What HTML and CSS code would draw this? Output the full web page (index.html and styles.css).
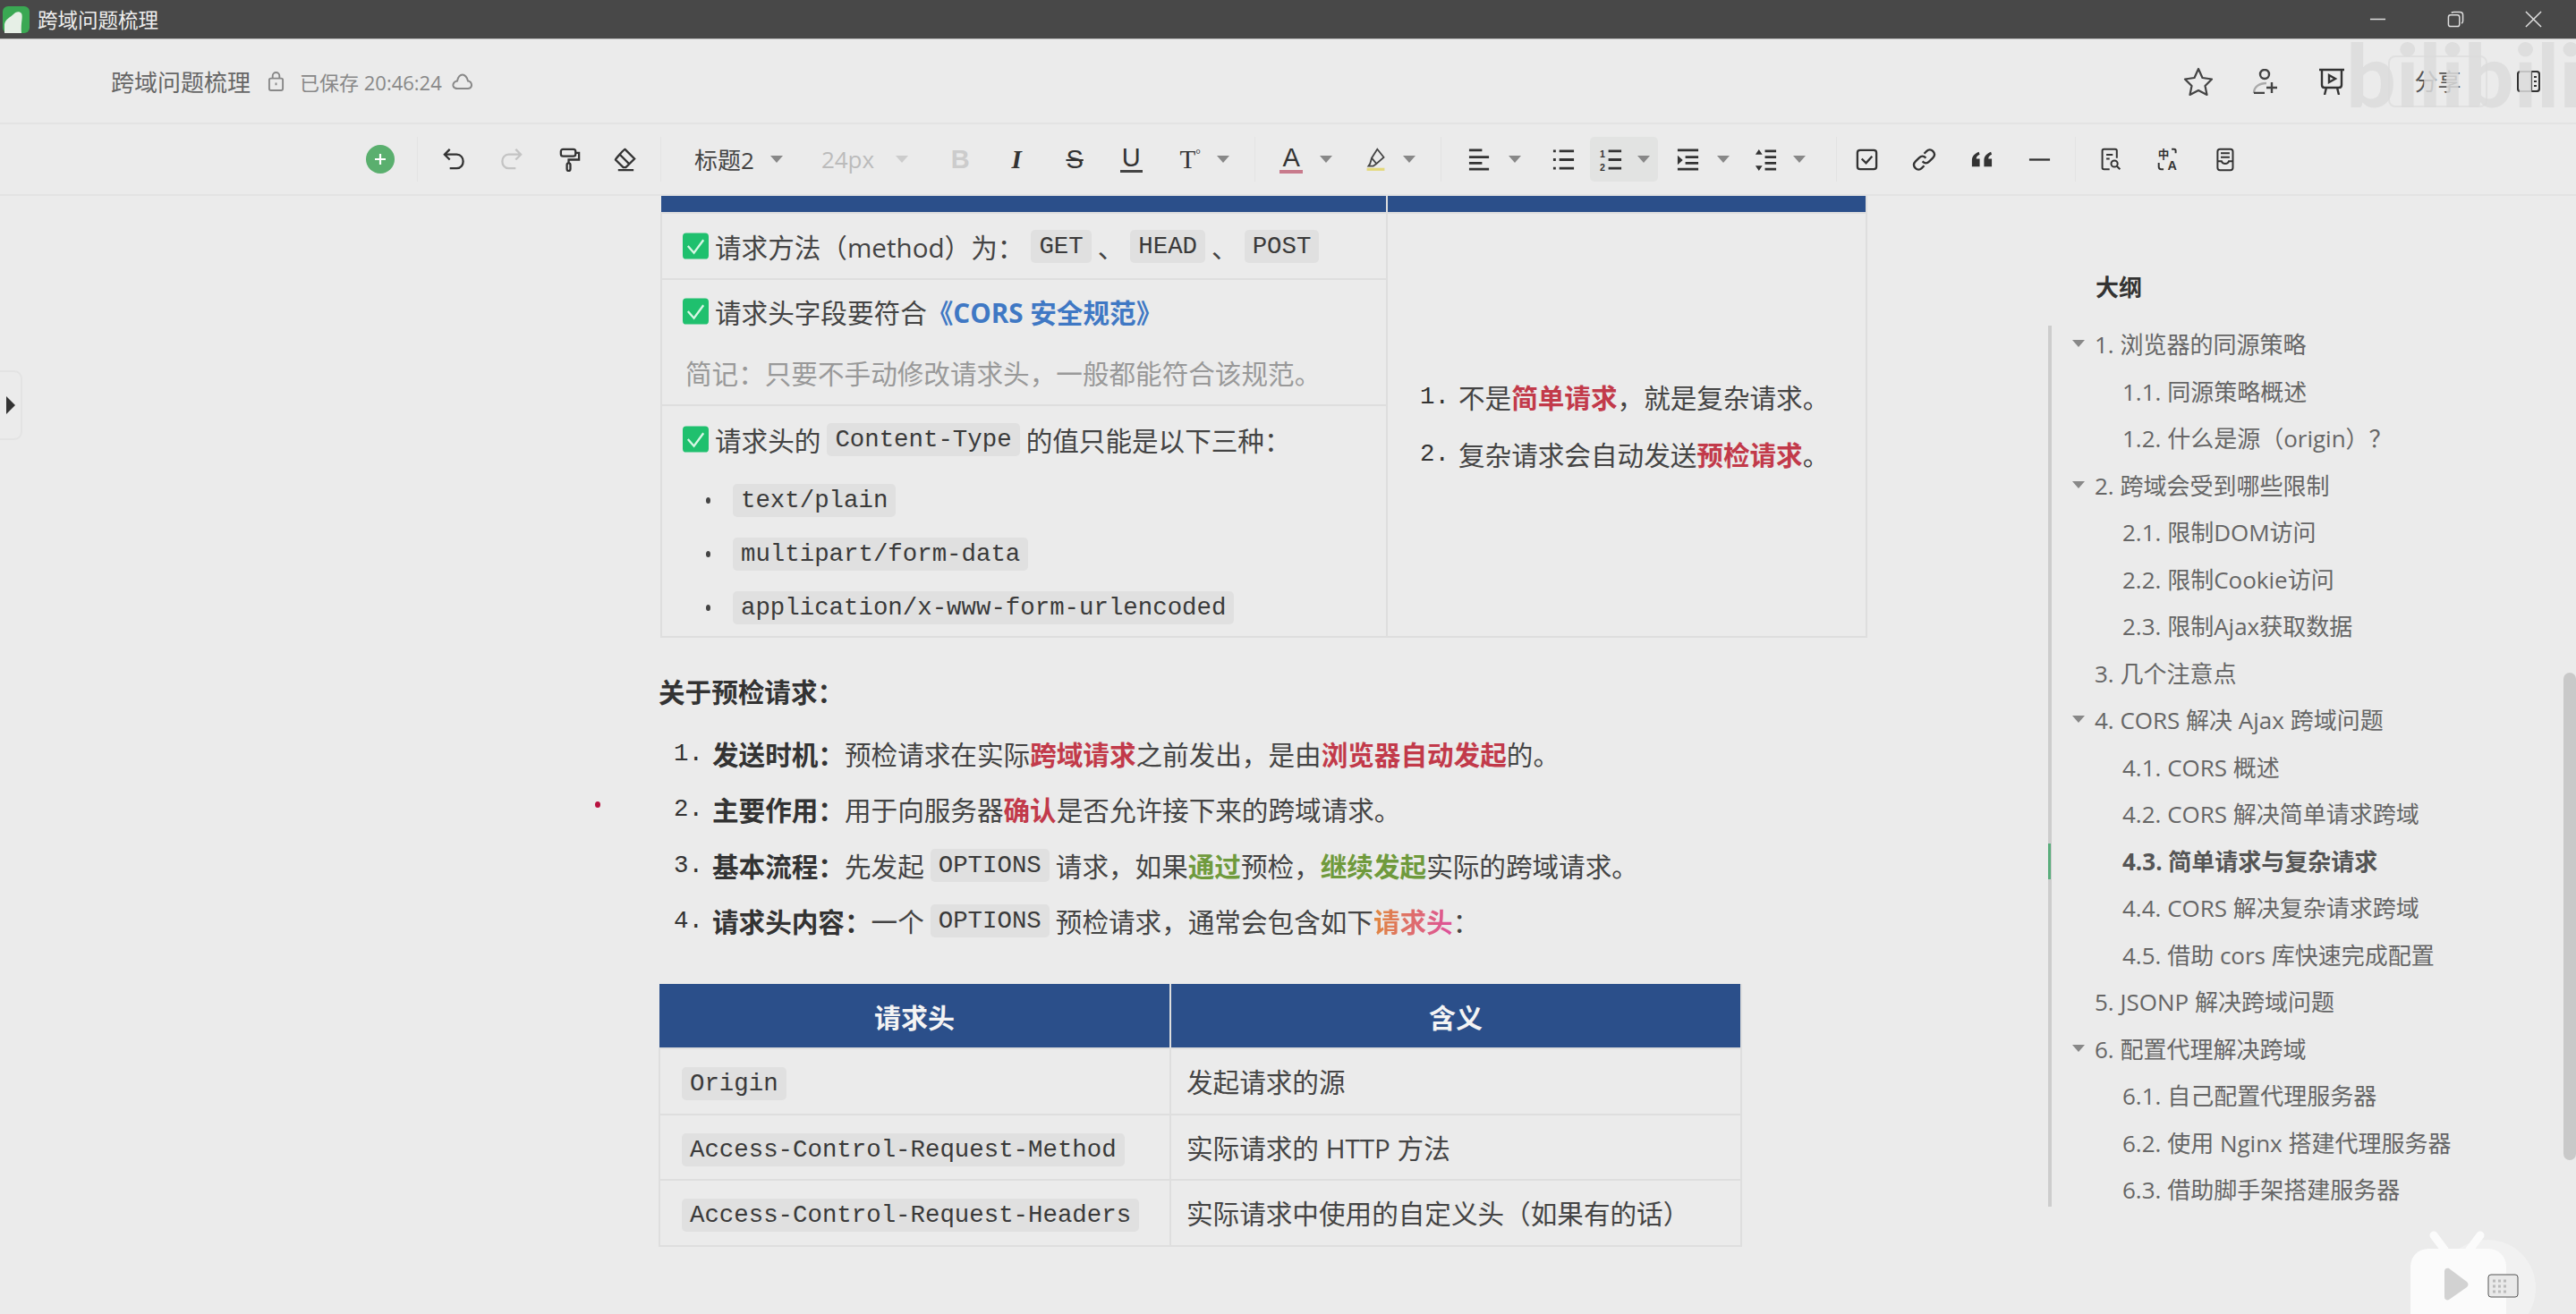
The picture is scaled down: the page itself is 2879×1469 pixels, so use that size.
FILE: index.html
```html
<!DOCTYPE html>
<html lang="zh-CN">
<head>
  <meta charset="UTF-8">
  <title>跨域问题梳理</title>
  <link rel="stylesheet" href="styles.css">
</head>
<body>

  <!-- 窗口标题栏 -->
  <div class="titlebar">
    <svg class="app-logo" viewBox="0 0 30 30">
      <rect width="30" height="30" rx="6" fill="#3aa853"/>
      <path d="M2 30V20C3 14 9 12 12 9C14 6 19 5 21 8C23 12 20 18 21 30Z" fill="#e6efe6"/>
    </svg>
    <span class="titlebar-name">跨域问题梳理</span>
    <div class="winbtns">
      <svg viewBox="0 0 20 20"><path d="M1 10H19" stroke="#ddd" stroke-width="1.6"/></svg>
      <svg viewBox="0 0 20 20" fill="none" stroke="#ddd" stroke-width="1.6"><rect x="1.5" y="5" width="13" height="13.5" rx="2.5"/><path d="M5 2.5C6 1.5 7 1.5 8 1.5H15C17 1.5 18.5 3 18.5 5V12C18.5 13.5 18 14 17 15"/></svg>
      <svg viewBox="0 0 20 20"><path d="M1 1L19 19M19 1L1 19" stroke="#ddd" stroke-width="1.6"/></svg>
    </div>
  </div>

  <!-- 文档信息行 -->
  <div class="docbar">
    <span class="doc-name">跨域问题梳理</span>
    <svg class="doc-lock" viewBox="0 0 20 24" fill="none" stroke="#888" stroke-width="2"><rect x="2" y="9" width="16" height="14" rx="2"/><path d="M6 9V6a4 4 0 0 1 8 0v3M10 14v3"/></svg>
    <span class="doc-saved">已保存 20:46:24</span>
    <svg class="doc-cloud" viewBox="0 0 24 18" fill="none" stroke="#888" stroke-width="2"><path d="M6 17H18C22 17 23 13 21 10C20 9 19 8.500 18 8.500C17 4 14 1.500 12 1.500C9 1.500 7 4 6 8.500C3 9 1 11 1.500 14C2 16 4 17 6 17Z"/></svg>
    <div class="doc-actions">
      <svg class="act-star" viewBox="0 0 34 32" fill="none" stroke="#444" stroke-width="2.200" stroke-linejoin="round"><path d="M17 2L21.500 12L32 13.500L24.500 21L26.500 31L17 26L7.500 31L9.500 21L2 13.500L12.500 12Z"/></svg>
      <svg class="act-user" viewBox="0 0 30 28" fill="none" stroke="#444" stroke-width="2.400"><circle cx="14" cy="6" r="5"/><path d="M2 27C2 20 8 16 16 16" stroke="#aaa"/><path d="M2 27H14M22 15V27M16 21H28"/></svg>
      <svg class="act-show" viewBox="0 0 30 30" fill="none" stroke="#333" stroke-width="2.400"><path d="M1 2H29M4 2V19C4 21 5 22 7 22H23C25 22 26 21 26 19V2M9 22L7 30M21 22L23 30"/><path d="M12 8L19 12L12 16Z"/></svg>
      <span class="share-btn">分享</span>
      <svg class="act-panel" viewBox="0 0 26 24" fill="none" stroke="#333" stroke-width="2.200"><rect x="1" y="1" width="24" height="22" rx="3"/><path d="M16 1V23"/><path d="M19 7H22M19 12H22M19 17H22"/></svg>
    </div>
  </div>

  <!-- 工具栏 -->
  <div class="toolbar">
    <span class="tool"><svg class="ic-plus" viewBox="0 0 32 32"><circle cx="16" cy="16" r="16" fill="#5aaf6e"/><path d="M16 10V22M10 16H22" stroke="#fff" stroke-width="2.200"/></svg></span>
    <i class="sep ml21"></i>
    <span class="tool ml20"><svg viewBox="0 0 28 28" class="stroke"><path d="M9 2L3 8L9 14M3 8H17C27 8 27 24 17 24H9"/></svg></span>
    <span class="tool ml24"><svg viewBox="0 0 28 28" class="stroke muted"><path d="M19 2L25 8L19 14M25 8H11C1 8 1 24 11 24H19"/></svg></span>
    <span class="tool ml25"><svg viewBox="0 0 28 28" class="stroke"><rect x="4" y="2" width="17" height="8" rx="2.500"/><path d="M21 6H25V14H13V18"/><rect x="11" y="18" width="4" height="9" rx="2"/></svg></span>
    <span class="tool ml22"><svg viewBox="0 0 28 28" class="stroke"><path d="M14 2L25 13L15 23H12L3 14C3 13 13 2 14 2ZM8 8L19 19M6 26H24"/></svg></span>
    <i class="sep ml20"></i>
    <span class="tool-text ml37">标题2</span>
    <i class="caret ml18"></i>
    <span class="tool-text off ml43">24px</span>
    <i class="caret light ml24"></i>
    <span class="tool glyph bold off ml38">B</span>
    <span class="tool glyph italic ml23">I</span>
    <span class="tool glyph strike ml25">S</span>
    <span class="tool ml23"><span class="glyph under">U</span></span>
    <span class="tool ml26"><span class="glyph size">T<sup>°</sup></span></span>
    <i class="caret ml10"></i>
    <i class="sep ml28"></i>
    <span class="tool ml20"><span class="glyph color-a">A</span></span>
    <i class="caret ml12"></i>
    <span class="tool ml28"><svg viewBox="0 0 28 30" fill="none" stroke="#444" stroke-width="2"><path d="M16 2L24 12L15 20L9 13ZM9 13L7 20L5 23H11L15 20"/><path d="M3 27H25" stroke="#e4d87a" stroke-width="3.500"/></svg></span>
    <i class="caret ml11"></i>
    <i class="sep ml28"></i>
    <span class="tool ml22"><svg viewBox="0 0 28 28" class="lines"><path d="M2 3H17M2 11H25M2 18H17M2 25H25"/></svg></span>
    <i class="caret ml13"></i>
    <span class="tool ml27"><svg viewBox="0 0 28 28" class="lines"><path d="M9 4H26M9 14H26M9 24H26M2 4H5M2 14H5M2 24H5"/></svg></span>
    <span class="tool-active ml10">
      <span class="tool"><svg viewBox="0 0 28 28" class="lines"><path d="M11 4H26M11 14H26M11 24H26"/><text x="1" y="11" class="mini">1</text><text x="1" y="27" class="mini">2</text></svg></span>
      <i class="caret ml10"></i>
    </span>
    <span class="tool ml13"><svg viewBox="0 0 28 28" class="lines"><path d="M2 3H26M11 11H26M11 18H26M2 25H26"/><path d="M2 9L8 14.500L2 20Z" fill="#333" stroke="none"/></svg></span>
    <i class="caret ml13"></i>
    <span class="tool ml20"><svg viewBox="0 0 28 28" class="lines"><path d="M13 4H26M13 11H26M13 18H26M13 25H26"/><path d="M6 2L10 8H2ZM6 27L2 21H10Z" fill="#333" stroke="none"/></svg></span>
    <i class="caret ml11"></i>
    <i class="sep ml34"></i>
    <span class="tool ml13"><svg viewBox="0 0 28 28" class="stroke"><rect x="3" y="3" width="22" height="22" rx="3"/><path d="M8 13L13 18L20 10"/></svg></span>
    <span class="tool ml24"><svg viewBox="0 0 28 28" class="stroke"><path d="M12 16C15 19 18 18 20 16L24 12C27 9 26 6 24 4C22 2 19 2 17 4L14 7M16 12C13 9 10 10 8 12L4 16C1 19 2 22 4 24C6 26 9 26 11 24L14 21"/></svg></span>
    <span class="tool ml24"><svg viewBox="0 0 28 28"><path d="M11 5C6 7 3 10 3 15V22H12V13H8C8 10 10 9 12 8ZM25 5C20 7 17 10 17 15V22H26V13H22C22 10 24 9 26 8Z" fill="#333"/></svg></span>
    <span class="tool ml25"><svg viewBox="0 0 28 28" class="stroke"><path d="M2 14H26"/></svg></span>
    <i class="sep ml20"></i>
    <span class="tool ml19"><svg viewBox="0 0 28 30" class="stroke thin"><path d="M12 27H5C3.500 27 3 26 3 25V4C3 3 3.500 2 5 2H19C20.500 2 21 3 21 4V13M8 9H16M8 14H12"/><circle cx="18" cy="20" r="4"/><path d="M21 23L25 27"/></svg></span>
    <span class="tool ml24"><svg viewBox="0 0 28 30" class="stroke thin"><text x="1" y="13" class="mini-zh">中</text><text x="13" y="28" class="mini-en">A</text><path d="M18 2H21C22 2 23 3 23 4V7M2 19V24C2 26 3 27 5 27H8"/></svg></span>
    <span class="tool ml23"><svg viewBox="0 0 28 30" class="stroke thin"><rect x="5" y="2" width="19" height="26" rx="3"/><path d="M9 7H20M9 12H20M5 17H10C11 21 18 21 19 17H24"/></svg></span>
  </div>

  <!-- 主体 -->
  <div class="main">
    <div class="side-tab"><i></i></div>
    <i class="red-dot"></i>

    <div class="doc">
      <table class="tbl tbl-top">
        <tr class="head-strip"><th></th><th></th></tr>
        <tr class="r1">
          <td>
            <div class="check-line"><svg class="check" viewBox="0 0 30 30"><rect width="30" height="30" rx="4" fill="#1fc06e"/><path d="M6 15L13 23L24 8" fill="none" stroke="#d8f7e6" stroke-width="2.400"/></svg>请求方法（method）为：<code class="gap-l">GET</code>、<code>HEAD</code>、<code>POST</code></div>
          </td>
          <td rowspan="3" class="right-cell">
            <ol class="plain-list">
              <li><span class="num">1.</span>不是<b class="red">简单请求</b>，就是复杂请求。</li>
              <li><span class="num">2.</span>复杂请求会自动发送<b class="red">预检请求</b>。</li>
            </ol>
          </td>
        </tr>
        <tr class="r2">
          <td>
            <div class="check-line tall"><svg class="check" viewBox="0 0 30 30"><rect width="30" height="30" rx="4" fill="#1fc06e"/><path d="M6 15L13 23L24 8" fill="none" stroke="#d8f7e6" stroke-width="2.400"/></svg>请求头字段要符合<b class="blue">《CORS 安全规范》</b></div>
            <div class="note">简记：只要不手动修改请求头，一般都能符合该规范。</div>
          </td>
        </tr>
        <tr class="r3">
          <td>
            <div class="check-line tall3"><svg class="check" viewBox="0 0 30 30"><rect width="30" height="30" rx="4" fill="#1fc06e"/><path d="M6 15L13 23L24 8" fill="none" stroke="#d8f7e6" stroke-width="2.400"/></svg>请求头的<code>Content-Type</code>的值只能是以下三种：</div>
            <ul class="dot-list">
              <li><code>text/plain</code></li>
              <li><code>multipart/form-data</code></li>
              <li><code>application/x-www-form-urlencoded</code></li>
            </ul>
          </td>
        </tr>
      </table>

      <p class="about">关于预检请求：</p>

      <ol class="plain-list steps">
        <li><span class="num">1.</span><b>发送时机：</b>预检请求在实际<b class="red">跨域请求</b>之前发出，是由<b class="red">浏览器自动发起</b>的。</li>
        <li><span class="num">2.</span><b>主要作用：</b>用于向服务器<b class="red">确认</b>是否允许接下来的跨域请求。</li>
        <li><span class="num">3.</span><b>基本流程：</b>先发起<code>OPTIONS</code>请求，如果<b class="green">通过</b>预检，<b class="green">继续发起</b>实际的跨域请求。</li>
        <li><span class="num">4.</span><b>请求头内容：</b>一个<code>OPTIONS</code>预检请求，通常会包含如下<b class="grad">请求头</b>：</li>
      </ol>

      <table class="tbl tbl-bottom">
        <tr class="head-row"><th>请求头</th><th>含义</th></tr>
        <tr><td><code class="flush">Origin</code></td><td>发起请求的源</td></tr>
        <tr><td><code class="flush">Access-Control-Request-Method</code></td><td>实际请求的 HTTP 方法</td></tr>
        <tr><td><code class="flush">Access-Control-Request-Headers</code></td><td>实际请求中使用的自定义头（如果有的话）</td></tr>
      </table>
    </div>

    <!-- 大纲 -->
    <div class="outline">
      <div class="outline-title">大纲</div>
      <ul class="outline-list">
        <li class="lv1 open">1. 浏览器的同源策略</li>
        <li class="lv2">1.1. 同源策略概述</li>
        <li class="lv2">1.2. 什么是源（origin）？</li>
        <li class="lv1 open">2. 跨域会受到哪些限制</li>
        <li class="lv2">2.1. 限制DOM访问</li>
        <li class="lv2">2.2. 限制Cookie访问</li>
        <li class="lv2">2.3. 限制Ajax获取数据</li>
        <li class="lv1">3. 几个注意点</li>
        <li class="lv1 open">4. CORS 解决 Ajax 跨域问题</li>
        <li class="lv2">4.1. CORS 概述</li>
        <li class="lv2">4.2. CORS 解决简单请求跨域</li>
        <li class="lv2 active">4.3. 简单请求与复杂请求</li>
        <li class="lv2">4.4. CORS 解决复杂请求跨域</li>
        <li class="lv2">4.5. 借助 cors 库快速完成配置</li>
        <li class="lv1">5. JSONP 解决跨域问题</li>
        <li class="lv1 open">6. 配置代理解决跨域</li>
        <li class="lv2">6.1. 自己配置代理服务器</li>
        <li class="lv2">6.2. 使用 Nginx 搭建代理服务器</li>
        <li class="lv2">6.3. 借助脚手架搭建服务器</li>
      </ul>
    </div>

    <div class="scroll-thumb"></div>
  </div>

  <!-- 视频水印 -->
  <span class="watermark">bilibili</span>
  <svg class="tv-logo" viewBox="0 0 160 94">
    <circle cx="100" cy="65" r="54" fill="#f1f1f1"/>
    <path d="M40 6L52 22M92 6L80 22" stroke="#fbfbfb" stroke-width="9" stroke-linecap="round"/>
    <rect x="14" y="21" width="107" height="100" rx="20" fill="#fbfbfb"/>
    <path d="M52 46C52 43 55 42 57 43L77 58C79 60 79 62 77 64L57 78C55 79 52 78 52 75Z" fill="#d2d2d2"/>
    <rect x="101" y="50" width="33" height="25" rx="3" fill="#e9e9e9" stroke="#555" stroke-width="1"/>
    <path d="M106 57H124M106 63H124M106 69H124" stroke="#bbb" stroke-width="3" stroke-dasharray="3 3"/>
  </svg>

</body>
</html>
```

FILE: styles.css
```css
* {
  box-sizing: border-box;
}

html, body {
  margin: 0;
  padding: 0;
}

body {
  position: relative;
  width: 2879px;
  height: 1469px;
  overflow: hidden;
  display: flex;
  flex-direction: column;
  background-color: #ebebeb;
  color: #444;
  font-family: "Open Sans", "Noto Sans CJK SC", sans-serif;
  font-size: 29.6px;
}

/* 标题栏 */
.titlebar {
  display: flex;
  align-items: center;
  flex: none;
  height: 44px;
  padding-left: 3px;
  background-color: #484848;
  border-bottom: 1px solid #bdbdbd;
}

.app-logo {
  width: 30px;
  height: 30px;
}

.titlebar-name {
  margin-left: 9px;
  color: #eee;
  font-size: 22.500px;
}

.winbtns {
  display: flex;
  align-items: center;
  margin-left: auto;
  padding-right: 38px;
}

.winbtns svg {
  width: 19px;
  height: 19px;
  margin-left: 68px;
}

/* 文档信息行 */
.docbar {
  display: flex;
  align-items: center;
  flex: none;
  height: 95px;
  padding-left: 124px;
  border-bottom: 2px solid #e3e3e3;
}

.doc-name {
  color: #666;
  font-size: 26px;
}

.doc-lock {
  width: 19px;
  height: 23px;
  margin-left: 19px;
}

.doc-saved {
  margin-left: 17px;
  color: #888;
  font-size: 22px;
}

.doc-cloud {
  width: 24px;
  height: 18px;
  margin-left: 11px;
}

.doc-actions {
  display: flex;
  align-items: center;
  margin-left: auto;
  padding-right: 40px;
}

.act-star {
  width: 34px;
  height: 32px;
}

.act-user {
  width: 30px;
  height: 28px;
  margin-left: 43px;
}

.act-show {
  width: 30px;
  height: 30px;
  margin-left: 44px;
}

.share-btn {
  width: 111px;
  height: 58px;
  margin-left: 48px;
  border: 2px solid #e0e0e0;
  border-radius: 8px;
  color: #555;
  font-size: 26px;
  line-height: 54px;
  text-align: center;
}

.act-panel {
  width: 26px;
  height: 24px;
  margin-left: 33px;
}

/* 工具栏 */
.toolbar {
  display: flex;
  align-items: center;
  flex: none;
  height: 80px;
  padding-left: 405px;
  border-bottom: 2px solid #e3e3e3;
}

.tool {
  display: flex;
  align-items: center;
  justify-content: center;
  flex: none;
  width: 40px;
  height: 32px;
  color: #333;
}

.tool svg {
  width: 27px;
  height: 27px;
}

.tool svg.ic-plus {
  width: 32px;
  height: 32px;
}

.tool-text {
  color: #444;
  font-size: 26px;
}

.tool-text.off {
  color: #bbb;
}

.tool-active {
  display: flex;
  align-items: center;
  height: 50px;
  padding: 0 9px 0 3px;
  border-radius: 5px;
  background-color: #e2e3e2;
}

.sep {
  flex: none;
  width: 1px;
  height: 50px;
  background-color: #e3e3e3;
}

.caret {
  flex: none;
  width: 0;
  height: 0;
  border-left: 7px solid transparent;
  border-right: 7px solid transparent;
  border-top: 8px solid #888;
}

.caret.light {
  border-top-color: #ccc;
}

.stroke {
  fill: none;
  stroke: #333;
  stroke-width: 2.400;
}

.stroke.muted {
  stroke: #c4c4c4;
}

.stroke.thin {
  stroke-width: 2.200;
}

.lines {
  fill: none;
  stroke: #333;
  stroke-width: 3;
}

.mini {
  fill: #333;
  stroke: none;
  font: bold 11px "Liberation Sans", sans-serif;
}

.mini-zh {
  fill: #333;
  stroke: none;
  font: bold 14px "Noto Sans CJK SC", sans-serif;
}

.mini-en {
  fill: #333;
  stroke: none;
  font: bold 16px "Liberation Sans", sans-serif;
}

.glyph {
  color: #333;
  font-family: "Liberation Sans", sans-serif;
  font-size: 29px;
  line-height: 32px;
}

.glyph.bold {
  font-weight: 700;
  color: #ccc;
}

.glyph.italic {
  font-family: "Liberation Serif", serif;
  font-style: italic;
  font-weight: 700;
}

.glyph.strike {
  text-decoration: line-through;
  text-decoration-thickness: 2px;
}

.glyph.under {
  padding: 0 2px 1px;
  border-bottom: 3px solid #444;
  line-height: 26px;
}

.glyph.size {
  font-family: "Liberation Serif", serif;
}

.glyph.size sup {
  font-size: 14px;
  line-height: 0;
}

.glyph.color-a {
  padding: 0 3px;
  border-bottom: 4px solid #c87a8c;
  font-weight: 400;
  line-height: 28px;
}

.ml10 { margin-left: 10px; }
.ml11 { margin-left: 11px; }
.ml12 { margin-left: 12px; }
.ml13 { margin-left: 13px; }
.ml18 { margin-left: 18px; }
.ml19 { margin-left: 19px; }
.ml20 { margin-left: 20px; }
.ml21 { margin-left: 21px; }
.ml22 { margin-left: 22px; }
.ml23 { margin-left: 23px; }
.ml24 { margin-left: 24px; }
.ml25 { margin-left: 25px; }
.ml26 { margin-left: 26px; }
.ml27 { margin-left: 27px; }
.ml28 { margin-left: 28px; }
.ml34 { margin-left: 34px; }
.ml37 { margin-left: 37px; }
.ml38 { margin-left: 38px; }
.ml43 { margin-left: 43px; }

/* 主体 */
.main {
  position: relative;
  display: flex;
  flex: 1;
  min-height: 0;
}

.side-tab {
  position: absolute;
  top: 195px;
  left: 0;
  display: flex;
  align-items: center;
  width: 25px;
  height: 78px;
  padding-left: 7px;
  border: 2px solid #e3e3e3;
  border-left: none;
  border-radius: 0 9px 9px 0;
}

.side-tab i {
  border-top: 10px solid transparent;
  border-bottom: 10px solid transparent;
  border-left: 10px solid #333;
}

.red-dot {
  position: absolute;
  top: 677px;
  left: 665px;
  width: 6px;
  height: 7px;
  border-radius: 50%;
  background-color: #b8123f;
}

.doc {
  flex: none;
  width: 1553px;
  margin-left: 736px;
}

code {
  display: inline-block;
  height: 37px;
  margin: 0 7px;
  padding: 0 9px;
  border-radius: 5px;
  background-color: #e0e0e0;
  color: #3a3a3a;
  font-family: "Liberation Mono", monospace;
  font-size: 27.400px;
  line-height: 37px;
  vertical-align: middle;
}

code.flush {
  margin: 0;
}

code.gap-l {
  margin-left: 8px;
}

.red {
  color: #c23a4a;
}

.green {
  color: #6f9a3c;
}

.blue {
  color: #3f78c4;
}

.grad {
  background: linear-gradient(100deg, #e08a3a, #dd4fa0);
  -webkit-background-clip: text;
  background-clip: text;
  color: transparent;
}

/* 表格 */
.tbl {
  border-collapse: collapse;
  table-layout: fixed;
}

.tbl td {
  border: 2px solid #dedede;
  padding: 0;
}

.tbl-top {
  width: 1349px;
  margin-left: 2px;
}

.tbl-top th:first-child {
  width: 811px;
}

.tbl-top th {
  height: 19px;
  padding: 0;
  border-right: 2px solid #dedede;
  background-color: #2b4f8a;
}

.tbl-top td:first-child {
  padding-left: 23px;
}

.r1 {
  height: 74px;
}

.r2 {
  height: 141px;
}

.r3 {
  height: 259px;
}

.r3 td {
  vertical-align: top;
}

.check-line {
  display: flex;
  align-items: center;
  height: 40px;
  white-space: nowrap;
}

.check-line.tall {
  height: 69px;
}

.check-line.tall3 {
  height: 60px;
  margin-top: 7px;
}

.check {
  flex: none;
  width: 29px;
  height: 30px;
  margin-right: 7px;
}

.note {
  height: 69px;
  padding-left: 3px;
  color: #999;
  line-height: 69px;
}

.dot-list {
  margin: 8px 0 0;
  padding: 0;
  list-style: none;
}

.dot-list li {
  display: flex;
  align-items: center;
  height: 60px;
  padding-left: 26px;
}

.dot-list li::before {
  content: "";
  width: 5px;
  height: 7px;
  margin-right: 25px;
  border-radius: 50%;
  background-color: #444;
}

.dot-list code {
  margin: 0;
}

.right-cell {
  padding-left: 36px !important;
}

.plain-list {
  margin: 0;
  padding: 0;
  list-style: none;
}

.plain-list li {
  display: flex;
  align-items: center;
  height: 64px;
  white-space: nowrap;
}

.num {
  flex: none;
  width: 43px;
  color: #333;
  font-family: "Liberation Mono", monospace;
  font-size: 27.400px;
}

.about {
  height: 42px;
  margin: 40px 0 0;
  color: #333;
  font-weight: 700;
  line-height: 42px;
}

.steps {
  margin: 16px 0 0 17px;
}

.steps li {
  height: 62.500px;
}

.steps li > b:not([class]) {
  color: #333;
}

.tbl-bottom {
  width: 1211px;
  margin-top: 39px;
}

.tbl-bottom th {
  height: 72px;
  padding: 0;
  background-color: #2b4f8a;
  color: #f4f4f4;
  font-size: 30px;
  font-weight: 700;
  border-right: 2px solid #dedede;
}

.tbl-bottom th:first-child {
  width: 571px;
}

.tbl-bottom tr {
  height: 73.500px;
}

.tbl-bottom td:first-child {
  padding-left: 24px;
}

.tbl-bottom td:last-child {
  padding-left: 17px;
}

.tbl-bottom tr.head-row {
  height: 72px;
}

/* 大纲 */
.outline {
  flex: none;
  width: 500px;
  padding-top: 82px;
}

.outline-title {
  height: 40px;
  margin-left: 53px;
  color: #333;
  font-size: 26px;
  font-weight: 700;
  line-height: 40px;
}

.outline-list {
  position: relative;
  height: 985px;
  margin: 23px 0 0;
  padding: 0;
  list-style: none;
  border-left: 4px solid #cdcdcd;
}

.outline-list li {
  position: relative;
  top: -5px;
  height: 52.500px;
  color: #666;
  font-size: 26px;
  line-height: 52.500px;
  white-space: nowrap;
}

.lv1 {
  padding-left: 48px;
}

.lv2 {
  padding-left: 79px;
}

.lv1.open::before {
  content: "";
  position: absolute;
  top: 21px;
  left: 23px;
  border-left: 7px solid transparent;
  border-right: 7px solid transparent;
  border-top: 8px solid #888;
}

.outline-list li.active {
  color: #555;
  font-weight: 700;
}

.active::after {
  content: "";
  position: absolute;
  top: 6px;
  left: -4px;
  width: 3px;
  height: 40px;
  background-color: #5aad7c;
}

.scroll-thumb {
  position: absolute;
  top: 533px;
  right: 0;
  width: 14px;
  height: 545px;
  border-radius: 7px;
  background-color: #c9c9c9;
}

/* 水印 */
.watermark {
  position: absolute;
  top: 22px;
  left: 2622px;
  color: #dcdcdc;
  font-family: "Lato", sans-serif;
  font-size: 98px;
  font-weight: 900;
  line-height: 120px;
  opacity: 0.85;
}

.tv-logo {
  position: absolute;
  right: 199px;
  bottom: 0;
  width: 160px;
  height: 94px;
  right: 39px;
}
```
